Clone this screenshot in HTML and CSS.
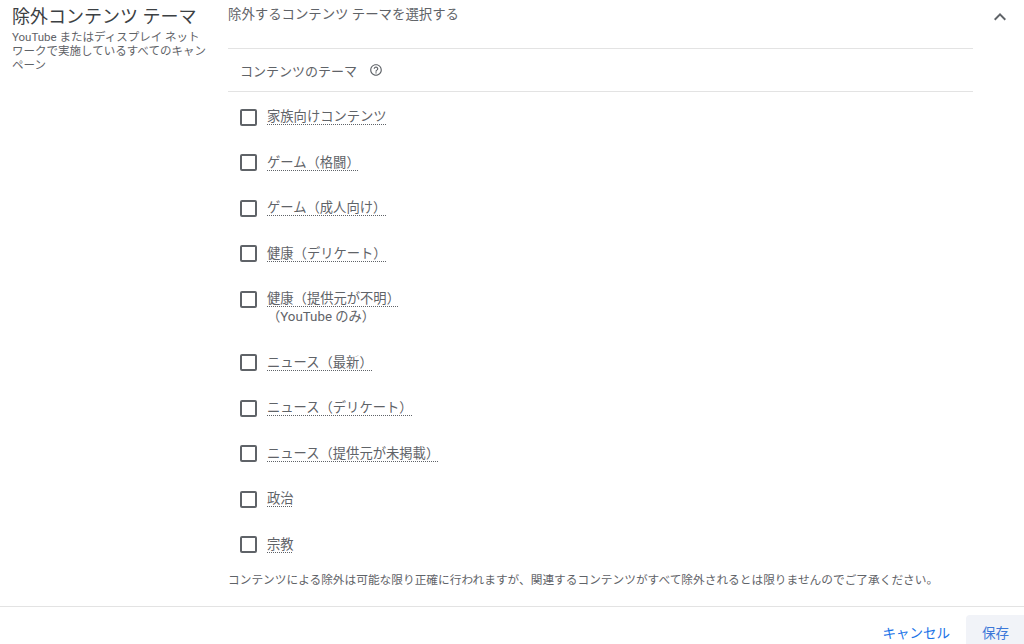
FILE: index.html
```html
<!DOCTYPE html>
<html lang="ja">
<head>
<meta charset="utf-8">
<link rel="stylesheet" href="styles.css">
</head>
<body>
<div class="page">
  <div class="main">
    <div class="left">
      <div class="title">除外コンテンツ テーマ</div>
      <div class="subtitle">YouTube またはディスプレイ ネットワークで実施しているすべてのキャンペーン</div>
    </div>
    <div class="right">
      <div class="head">除外するコンテンツ テーマを選択する</div>
      <div class="theme-head">
        <span>コンテンツのテーマ</span>
        <svg class="help" viewBox="0 0 24 24" width="14" height="14"><path fill="#5f6368" d="M11 18h2v-2h-2v2zm1-16C6.48 2 2 6.48 2 12s4.480 10 10 10 10-4.48 10-10S17.52 2 12 2zm0 18c-4.41 0-8-3.590-8-8s3.590-8 8-8 8 3.590 8 8-3.590 8-8 8zm0-14c-2.21 0-4 1.790-4 4h2c0-1.1.9-2 2-2s2 .9 2 2c0 2-3 1.75-3 5h2c0-2.25 3-2.5 3-5 0-2.21-1.79-4-4-4z"/></svg>
      </div>
      <ul class="list">
        <li class="row"><span class="box"></span><div class="label"><span class="u">家族向けコンテンツ</span></div></li>
        <li class="row"><span class="box"></span><div class="label"><span class="u">ゲーム（格闘）</span></div></li>
        <li class="row"><span class="box"></span><div class="label"><span class="u">ゲーム（成人向け）</span></div></li>
        <li class="row"><span class="box"></span><div class="label"><span class="u">健康（デリケート）</span></div></li>
        <li class="row"><span class="box"></span><div class="label"><span class="u">健康（提供元が不明）</span><div class="sub">（YouTube のみ）</div></div></li>
        <li class="row"><span class="box"></span><div class="label"><span class="u">ニュース（最新）</span></div></li>
        <li class="row"><span class="box"></span><div class="label"><span class="u">ニュース（デリケート）</span></div></li>
        <li class="row"><span class="box"></span><div class="label"><span class="u">ニュース（提供元が未掲載）</span></div></li>
        <li class="row"><span class="box"></span><div class="label"><span class="u">政治</span></div></li>
        <li class="row"><span class="box"></span><div class="label"><span class="u">宗教</span></div></li>
      </ul>
      <p class="note">コンテンツによる除外は可能な限り正確に行われますが、関連するコンテンツがすべて除外されるとは限りませんのでご了承ください。</p>
    </div>
    <div class="toggle-col">
      <svg class="chev" viewBox="0 0 24 24" width="24" height="24"><path fill="#5f6368" d="M12 8l-6 6 1.41 1.41L12 10.83l4.59 4.58L18 14z"/></svg>
    </div>
  </div>
  <div class="footer">
    <button class="btn cancel">キャンセル</button>
    <button class="btn save">保存</button>
  </div>
</div>
</body>
</html>
```

FILE: styles.css
```css
html, body {
  margin: 0;
  padding: 0;
  background: #fff;
  overflow: hidden;
}
body {
  font-family: Roboto, "Noto Sans CJK JP", sans-serif;
  color: #3c4043;
  width: 1024px;
  height: 644px;
}
.page {
  display: flex;
  flex-direction: column;
}
.main {
  display: flex;
}
.left {
  width: 198px;
  padding: 5px 18px 0 12px;
  flex: none;
}
.title {
  font-size: 18px;
  line-height: 24px;
  color: #3c4043;
}
.subtitle {
  font-size: 11.5px;
  line-height: 14px;
  color: #5f6368;
  margin-top: 1px;
}
.right {
  width: 745px;
  flex: none;
}
.head {
  height: 43px;
  padding-top: 5px;
  font-size: 13.4px;
  line-height: 20px;
  color: #5f6368;
  border-bottom: 1px solid #e3e3e3;
}
.theme-head {
  height: 42px;
  display: flex;
  align-items: center;
  padding-left: 12px;
  font-size: 13px;
  color: #5f6368;
  border-bottom: 1px solid #e3e3e3;
}
.help {
  margin-left: 12px;
}
.list {
  list-style: none;
  margin: 0;
  padding: 2.25px 0 0 12px;
}
.row {
  display: flex;
  align-items: flex-start;
  padding: 13.75px 0;
}
.box {
  flex: none;
  width: 13px;
  height: 13px;
  border: 2px solid #5f6368;
  border-radius: 2px;
  margin-top: 0.5px;
  box-sizing: content-box;
}
.label {
  margin-left: 10px;
  font-size: 13.3px;
  line-height: 18px;
  color: #5f6368;
}
.u {
  text-decoration: underline dotted #5f6368;
  text-underline-offset: 3px;
  text-decoration-thickness: 1px;
}
.sub {
  line-height: 18px;
}
.note {
  margin: 4.25px 0 18px;
  font-size: 11.7px;
  line-height: 16px;
  color: #5f6368;
}
.toggle-col {
  flex: 1;
  padding: 5px 0 0 15px;
}
.chev {
  display: block;
}
.footer {
  border-top: 1px solid #e3e3e3;
  padding-top: 8px;
  display: flex;
  justify-content: flex-end;
}
.btn {
  font-family: Roboto, "Noto Sans CJK JP", sans-serif;
  font-size: 13.5px;
  height: 36px;
  line-height: 36px;
  border: none;
  background: none;
  color: #1a73e8;
  padding: 0 16px;
  margin: 0;
  border-radius: 4px 0 0 0;
}
.save {
  background: #f1f3f8;
  padding: 0 15px 0 16px;
  color: #3c78d8;
}
.cancel {
  color: #1a73e8;
}
```
